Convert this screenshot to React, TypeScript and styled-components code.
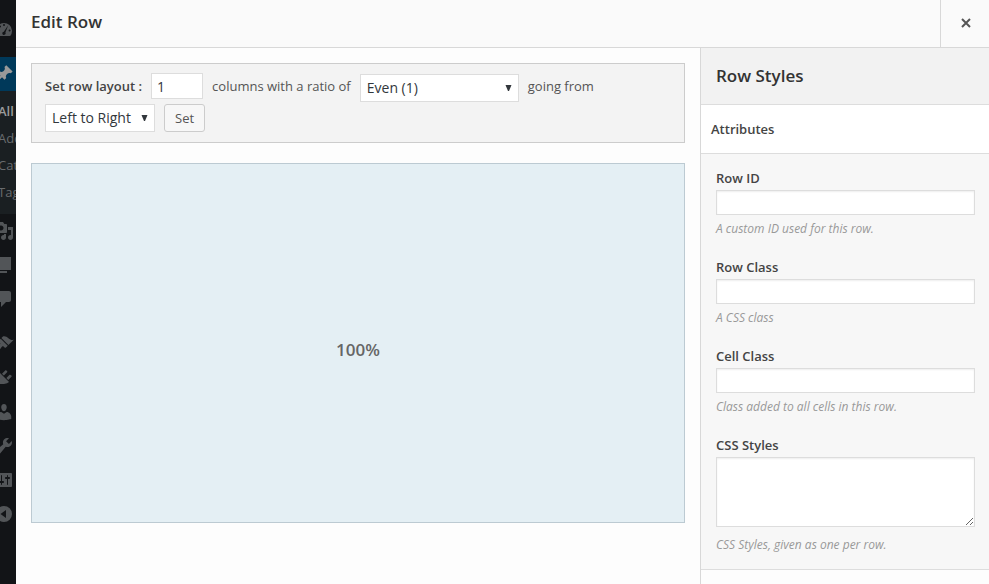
import React, { ReactNode } from 'react';
import styled, { createGlobalStyle } from 'styled-components';

const GlobalStyle = createGlobalStyle`
  *, *::before, *::after { box-sizing: border-box; }
  body {
    margin: 0;
    background: #fdfdfd;
    color: #444;
    font-family: 'Open Sans', 'Noto Sans', sans-serif;
    font-size: 13px;
    line-height: 20px;
  }
  h1, h2, h3, p, ul { margin: 0; padding: 0; }
  button, input, select, textarea { font-family: inherit; margin: 0; }
`;

const Screen = styled.div`
  display: grid;
  grid-template-columns: 16px minmax(0, 1fr);
  min-height: 100vh;
`;

const AdminMenu = styled.nav`
  overflow: hidden;
  padding-top: 12px;
  background: #121417;
`;

const MenuLink = styled.a<{ $active?: boolean }>`
  display: flex;
  align-items: center;
  height: 34px;
  color: ${(p) => (p.$active ? '#999' : '#525558')};
  background: ${(p) => (p.$active ? '#00395a' : 'transparent')};
`;

const MenuIcon = styled.svg`
  display: block;
  flex: none;
  width: 14px;
  height: 20px;
  fill: currentColor;
`;

const MenuGap = styled.div`
  height: 11px;
`;

const SubMenu = styled.ul`
  list-style: none;
  padding: 7px 0 8px;
  background: #1a1f22;
`;

const SubLink = styled.a<{ $current?: boolean }>`
  display: block;
  height: 27px;
  margin-left: -2px;
  line-height: 27px;
  white-space: nowrap;
  text-decoration: none;
  font-weight: ${(p) => (p.$current ? 600 : 400)};
  color: ${(p) => (p.$current ? '#999' : '#686b6e')};
`;

const Dialog = styled.div`
  display: flex;
  flex-direction: column;
  min-width: 0;
`;

const TitleBar = styled.header`
  display: flex;
  align-items: stretch;
  justify-content: space-between;
  height: 48px;
  background: #fafafa;
  border-bottom: 1px solid #d8d8d8;
`;

const DialogTitle = styled.h1`
  padding: 0 15px;
  font-size: 17px;
  font-weight: 600;
  line-height: 44px;
  color: #333;
`;

const CloseButton = styled.button`
  display: flex;
  align-items: center;
  justify-content: center;
  width: 49px;
  padding: 0 0 1px 1px;
  border: 0;
  border-left: 1px solid #d8d8d8;
  background: #fafafa;
  color: #555;
`;

const Body = styled.div`
  display: grid;
  grid-template-columns: minmax(0, 1fr) 289px;
  flex: 1;
`;

const Main = styled.main`
  display: flex;
  flex-direction: column;
  gap: 20px;
  padding: 15px;
`;

const LayoutForm = styled.form`
  display: flex;
  flex-wrap: wrap;
  align-items: center;
  gap: 2px 9px;
  padding: 9px 13px 10px;
  background: #f3f3f3;
  border: 1px solid #ccc;
`;

const FormText = styled.label<{ $strong?: boolean }>`
  line-height: 24px;
  padding-bottom: 3px;
  font-weight: ${(p) => (p.$strong ? 600 : 400)};
  color: ${(p) => (p.$strong ? '#444' : '#555')};
`;

const CountInput = styled.input`
  width: 52px;
  height: 26px;
  margin-bottom: 3px;
  padding: 0 5px;
  border: 1px solid #ddd;
  background: #fff;
  color: #32373c;
  font-size: 14px;
`;

const SelectBox = styled.span<{ $width: number }>`
  display: grid;
  align-items: center;
  width: ${(p) => p.$width}px;
  height: 28px;

  > * { grid-area: 1 / 1; }
  > svg {
    justify-self: end;
    margin-right: 7px;
    pointer-events: none;
  }
`;

const Select = styled.select`
  appearance: none;
  width: 100%;
  height: 28px;
  padding: 0 6px;
  border: 1px solid #ddd;
  border-radius: 0;
  background: #fff;
  color: #32373c;
  font-size: 14px;
  line-height: 20px;
`;

const SetButton = styled.button`
  height: 28px;
  padding: 0 10px;
  border: 1px solid #ccc;
  border-radius: 3px;
  background: #f7f7f7;
  color: #555;
  font-size: 13px;
`;

const Preview = styled.section`
  display: grid;
  min-height: 360px;
  border: 1px solid #bccad2;
  background: #e4eff4;
`;

const Cell = styled.div`
  display: flex;
  align-items: center;
  justify-content: center;
  padding-top: 14px;
  font-size: 17px;
  font-weight: 600;
  color: #666;
`;

const Side = styled.aside`
  border-left: 1px solid #d8d8d8;
`;

const SideTitle = styled.h2`
  height: 57px;
  padding: 0 15px;
  border-bottom: 1px solid #ddd;
  background: #f2f2f2;
  color: #333;
  font-size: 17px;
  font-weight: 600;
  line-height: 56px;
`;

const SectionTitle = styled.h3`
  height: 49px;
  padding: 0 10px;
  border-bottom: 1px solid #ddd;
  background: #fff;
  color: #444;
  font-size: 13px;
  font-weight: 600;
  line-height: 48px;
`;

const Fields = styled.div`
  display: flex;
  flex-direction: column;
  gap: 19px;
  padding: 14px 14px 15px 15px;
  border-bottom: 1px solid #ddd;
  background: #f7f7f7;
`;

const FieldGroup = styled.div`
  display: flex;
  flex-direction: column;
`;

const FieldLabel = styled.label`
  margin-bottom: 2px;
  font-weight: 600;
  color: #444;
`;

const TextInput = styled.input`
  width: 100%;
  height: 25px;
  padding: 3px 5px;
  border: 1px solid #ddd;
  background: #fff;
  box-shadow: inset 0 1px 2px rgba(0, 0, 0, 0.07);
`;

const TextArea = styled.textarea`
  width: 100%;
  height: 70px;
  margin-bottom: 4px;
  padding: 3px 5px;
  border: 1px solid #ddd;
  background: #fff;
  box-shadow: inset 0 1px 2px rgba(0, 0, 0, 0.07);
  resize: vertical;
`;

const Hint = styled.p`
  margin-top: 5px;
  font-size: 12px;
  font-style: italic;
  line-height: 18px;
  color: #999;
`;

const icons = {
  dashboard:
    'M3.8 17h12.4A8 8 0 1 0 3.8 17zM10 5a1 1 0 1 1 0 2 1 1 0 0 1 0-2zM6 6.5a1 1 0 1 1 0 2 1 1 0 0 1 0-2zM14.2 6.2L11.4 13.6a1.6 1.6 0 1 1-1.6-.9zM4.5 10.5a1 1 0 1 1 0 2 1 1 0 0 1 0-2zM15.6 10.5a1 1 0 1 1 0 2 1 1 0 0 1 0-2z',
  post: 'M10.44 3.02l1.82-1.82 6.36 6.35-1.83 1.82c-1.05-.68-2.48-.57-3.41.36l-.75.75c-.92.93-1.04 2.35-.35 3.41l-1.83 1.82-2.41-2.41-2.8 2.79c-.42.42-3.38 2.71-3.8 2.29s1.86-3.39 2.28-3.81l2.79-2.79L4.1 9.36l1.83-1.82c1.05.69 2.48.57 3.4-.36l.75-.75c.93-.92 1.05-2.35.36-3.41z',
  media:
    'M13 11V4c0-.55-.45-1-1-1h-1.67L9 1H5L3.67 3H2c-.55 0-1 .45-1 1v7c0 .55.45 1 1 1h10c.55 0 1-.45 1-1zM7 4.5c1.38 0 2.5 1.12 2.5 2.5S8.38 9.5 7 9.5 4.5 8.38 4.5 7 5.62 4.5 7 4.5zM14 6h5v10.5c0 1.38-1.12 2.5-2.5 2.5S14 17.88 14 16.5s1.12-2.5 2.5-2.5c.17 0 .34.02.5.05V9h-3V6zm-4 8.05V13h2v3.5c0 1.38-1.12 2.5-2.5 2.5S7 17.88 7 16.5 8.12 14 9.5 14c.17 0 .34.02.5.05z',
  pages: 'M6 15V2h11v13H6zm-1 1h8v2H3V5h2v11z',
  comments:
    'M5 2h10c1.1 0 2 .9 2 2v7c0 1.1-.9 2-2 2h-3l-5 5v-5H5c-1.1 0-2-.9-2-2V4c0-1.1.9-2 2-2z',
  appearance:
    'M14.48 11.06L7.41 3.99l1.5-1.5c.5-.56 2.3-.47 3.51.32 1.21.8 1.43 1.28 2.91 2.1 1.18.64 2.45 1.26 4.45.85zm-.71.71L6.7 4.7 4.93 6.47c-.39.39-.39 1.02 0 1.41l1.06 1.06c.39.39.39 1.03 0 1.42-.6.6-1.43 1.11-2.21 1.69-.35.26-.7.53-1.01.84C1.43 14.23.4 16.08 1.4 17.07c.99 1 2.84-.03 4.18-1.36.31-.31.58-.66.85-1.02.57-.78 1.08-1.61 1.69-2.21.39-.39 1.02-.39 1.41 0l1.06 1.06c.39.39 1.02.39 1.41 0z',
  plugins:
    'M13.11 4.36L9.87 7.6 8 5.73l3.24-3.24c.35-.34 1.05-.2 1.56.32.52.51.66 1.21.31 1.55zm-8 1.77l.91-1.12 9.01 9.01-1.19.84c-.71.71-2.63 1.16-3.82 1.16H6.14L4.9 17.26c-.59.59-1.54.59-2.12 0-.59-.58-.59-1.53 0-2.12l1.24-1.24v-3.88c0-1.13.4-3.19 1.09-3.89zm7.26 3.97l3.24-3.24c.34-.35 1.04-.21 1.55.31.52.51.66 1.21.31 1.55l-3.24 3.25z',
  users:
    'M10 9.25c-2.27 0-2.73-3.44-2.73-3.44C7 4.02 7.82 2 9.97 2c2.16 0 2.98 2.02 2.71 3.81 0 0-.41 3.44-2.68 3.44zm0 2.57L12.72 10c2.39 0 4.52 2.33 4.52 4.53v2.49s-3.65 1.13-7.24 1.13c-3.65 0-7.24-1.13-7.24-1.13v-2.49c0-2.25 1.94-4.48 4.47-4.48z',
  tools:
    'M16.68 9.77c-1.34 1.34-3.3 1.67-4.95.99l-5.41 6.52c-.99.99-2.59.99-3.58 0s-.99-2.59 0-3.57l6.52-5.42c-.68-1.65-.35-3.61.99-4.95 1.28-1.28 3.12-1.62 4.72-1.06l-2.89 2.89 2.82 2.82 2.86-2.87c.53 1.58.18 3.39-1.08 4.65zM3.81 16.21c.4.39 1.04.39 1.43 0 .4-.4.4-1.04 0-1.43-.39-.4-1.03-.4-1.43 0-.39.39-.39 1.03 0 1.43z',
  settings:
    'M18 16V4c0-.55-.45-1-1-1H3c-.55 0-1 .45-1 1v12c0 .55.45 1 1 1h14c.55 0 1-.45 1-1zM8 11h1c.55 0 1 .45 1 1s-.45 1-1 1H8v1.5c0 .28-.22.5-.5.5s-.5-.22-.5-.5V13H6c-.55 0-1-.45-1-1s.45-1 1-1h1V5.5c0-.28.22-.5.5-.5s.5.22.5.5V11zm5-2h-1c-.55 0-1-.45-1-1s.45-1 1-1h1V5.5c0-.28.22-.5.5-.5s.5.22.5.5V7h1c.55 0 1 .45 1 1s-.45 1-1 1h-1v5.5c0 .28-.22.5-.5.5s-.5-.22-.5-.5V9z',
  collapse: 'M10 2a8 8 0 1 1 0 16 8 8 0 0 1 0-16zM12 6L6.5 10l5.5 4z',
};

type IconName = keyof typeof icons;

// The menu is mostly tucked under the dialog, so each icon shows its right part only.
const MenuItem = ({ icon, active }: { icon: IconName; active?: boolean }) => (
  <MenuLink href="#" $active={active} aria-label={icon}>
    <MenuIcon viewBox="6 0 14 20" aria-hidden="true">
      <path fillRule="evenodd" d={icons[icon]} />
    </MenuIcon>
  </MenuLink>
);

const Dropdown = ({ id, label, width, options }: { id: string; label: string; width: number; options: string[] }) => (
  <SelectBox $width={width}>
    <Select id={id} aria-label={label}>
      {options.map((o) => (
        <option key={o}>{o}</option>
      ))}
    </Select>
    <svg width="7" height="6" viewBox="0 0 7 6" aria-hidden="true">
      <path d="M0.500 0h6L4 6h-1z" fill="#32373c" />
    </svg>
  </SelectBox>
);

const Field = ({ id, label, hint, children }: { id: string; label: string; hint: string; children: ReactNode }) => (
  <FieldGroup>
    <FieldLabel htmlFor={id}>{label}</FieldLabel>
    {children}
    <Hint>{hint}</Hint>
  </FieldGroup>
);

const submenu = ['All Posts', 'Add New', 'Categories', 'Tags'];
const upperItems: IconName[] = ['media', 'pages', 'comments'];
const lowerItems: IconName[] = ['appearance', 'plugins', 'users', 'tools', 'settings', 'collapse'];

export default function App() {
  return (
    <>
      <GlobalStyle />
      <Screen>
        <AdminMenu>
          <MenuItem icon="dashboard" />
          <MenuGap />
          <MenuItem icon="post" active />
          <SubMenu>
            {submenu.map((item, i) => (
              <li key={item}>
                <SubLink href="#" $current={i === 0}>{item}</SubLink>
              </li>
            ))}
          </SubMenu>
          {upperItems.map((icon) => <MenuItem key={icon} icon={icon} />)}
          <MenuGap />
          {lowerItems.map((icon) => <MenuItem key={icon} icon={icon} />)}
        </AdminMenu>

        <Dialog>
          <TitleBar>
            <DialogTitle>Edit Row</DialogTitle>
            <CloseButton type="button" aria-label="Close">
              <svg width="10" height="10" viewBox="0 0 10 10" aria-hidden="true">
                <path d="M1 1l8 8M9 1L1 9" stroke="currentColor" strokeWidth="2" />
              </svg>
            </CloseButton>
          </TitleBar>

          <Body>
            <Main>
              <LayoutForm onSubmit={(e) => e.preventDefault()}>
                <FormText $strong htmlFor="columns">Set row layout :</FormText>
                <CountInput id="columns" type="text" defaultValue="1" />
                <FormText htmlFor="ratio">columns with a ratio of</FormText>
                <Dropdown id="ratio" label="Ratio" width={159} options={['Even (1)']} />
                <FormText htmlFor="direction">going from</FormText>
                <Dropdown id="direction" label="Direction" width={110} options={['Left to Right', 'Right to Left']} />
                <SetButton type="submit">Set</SetButton>
              </LayoutForm>
              <Preview>
                <Cell>100%</Cell>
              </Preview>
            </Main>

            <Side>
              <SideTitle>Row Styles</SideTitle>
              <SectionTitle>Attributes</SectionTitle>
              <Fields>
                <Field id="row-id" label="Row ID" hint="A custom ID used for this row.">
                  <TextInput id="row-id" type="text" />
                </Field>
                <Field id="row-class" label="Row Class" hint="A CSS class">
                  <TextInput id="row-class" type="text" />
                </Field>
                <Field id="cell-class" label="Cell Class" hint="Class added to all cells in this row.">
                  <TextInput id="cell-class" type="text" />
                </Field>
                <Field id="css-styles" label="CSS Styles" hint="CSS Styles, given as one per row.">
                  <TextArea id="css-styles" />
                </Field>
              </Fields>
            </Side>
          </Body>
        </Dialog>
      </Screen>
    </>
  );
}
